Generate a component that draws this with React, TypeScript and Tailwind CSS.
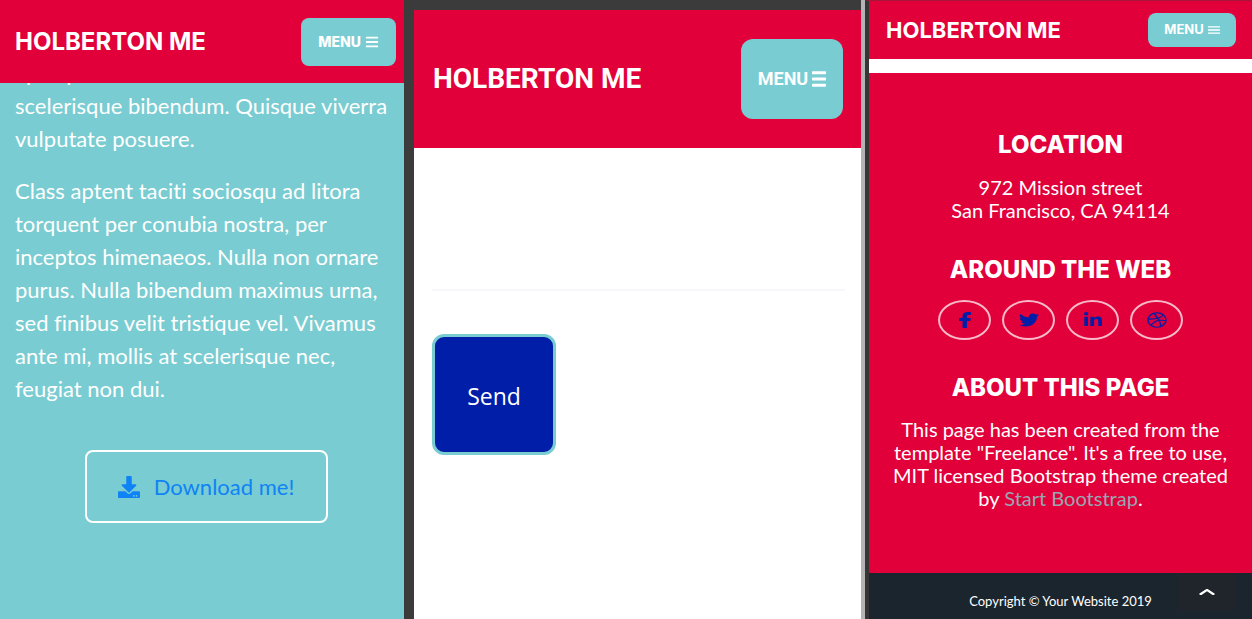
import React from "react";
import {
  FaBars,
  FaChevronUp,
  FaDownload,
  FaDribbble,
  FaFacebookF,
  FaLinkedinIn,
  FaTwitter,
} from "react-icons/fa";

const socialLinks = [
  { label: "Facebook", Icon: FaFacebookF, size: "h-4 w-[14px]" },
  { label: "Twitter", Icon: FaTwitter, size: "h-4 w-5" },
  { label: "LinkedIn", Icon: FaLinkedinIn, size: "h-4 w-[18px]" },
  { label: "Dribbble", Icon: FaDribbble, size: "h-4 w-5" },
];

function AboutPanel() {
  return (
    <section className="flex min-w-0 flex-col overflow-hidden bg-[#79ccd1] text-white">
      <header className="flex h-[83px] shrink-0 items-center justify-between bg-[#e1003a] pr-2 pl-[15px]">
        <a href="#top" className="font-['Inter',sans-serif] text-2xl leading-8 font-bold whitespace-nowrap">
          HOLBERTON ME
        </a>
        <button
          type="button"
          className="flex h-12 w-[95px] items-center justify-center gap-1 rounded-lg bg-[#79ccd1] font-['Inter',sans-serif] text-sm font-extrabold"
        >
          MENU <FaBars className="h-[14px] w-[14px]" aria-hidden="true" />
        </button>
      </header>
      <div className="overflow-hidden pl-[15px] font-['Lato',sans-serif] text-[22px] leading-[33px] [font-variant-ligatures:none]">
        <p className="-mt-[27px] mb-[19px] whitespace-nowrap">
          apex porta et
          <br />
          scelerisque bibendum. Quisque viverra
          <br />
          vulputate posuere.
        </p>
        <p className="whitespace-nowrap">
          Class aptent taciti sociosqu ad litora
          <br />
          torquent per conubia nostra, per
          <br />
          inceptos himenaeos. Nulla non ornare
          <br />
          purus. Nulla bibendum maximus urna,
          <br />
          sed finibus velit tristique vel. Vivamus
          <br />
          ante mi, mollis at scelerisque nec,
          <br />
          feugiat non dui.
        </p>
      </div>
      <a
        href="#download"
        className="mt-[45px] ml-2 flex h-[73px] w-[243px] items-center justify-center gap-[14px] self-center rounded-lg border-2 border-white font-['Lato',sans-serif] text-[22px] text-[#0f83f5]"
      >
        <FaDownload className="h-[22px] w-[22px]" aria-hidden="true" />
        Download me!
      </a>
    </section>
  );
}

function ContactPanel() {
  return (
    <section className="flex min-w-0 flex-col border-t-10 border-l-10 border-[#3b3b3b] bg-white">
      <header className="flex h-[138px] items-center justify-between bg-[#e1003a] pr-[18px] pl-[19px] text-white">
        <a href="#top" className="font-['Roboto',sans-serif] text-[28px] leading-8 font-bold whitespace-nowrap">
          HOLBERTON ME
        </a>
        <button
          type="button"
          className="flex h-20 w-[102px] items-center justify-center gap-1 rounded-xl bg-[#79ccd1] font-['Roboto',sans-serif] text-lg font-bold"
        >
          MENU <FaBars className="h-5 w-[14px]" preserveAspectRatio="none" aria-hidden="true" />
        </button>
      </header>
      <div className="flex flex-col items-start pt-[141px] pr-4 pl-[18px]">
        <hr className="w-full border-t-2 border-[#f5f7fa]" />
        <button
          type="submit"
          className="mt-[43px] h-[121px] w-[124px] rounded-xl border-3 border-[#79ccd1] bg-[#001ea8] pt-1 font-['Open_Sans',sans-serif] text-[23px] text-white"
        >
          Send
        </button>
      </div>
    </section>
  );
}

function FooterPanel() {
  return (
    <section className="flex min-w-0 border-l-4 border-[#b4b4b4]">
      <div className="flex min-w-0 grow flex-col border-t border-l-4 border-t-[#a5163a] border-l-[#353535] bg-white text-white">
        <header className="flex h-[58px] items-center justify-between bg-[#e1003a] pr-4 pl-[17px]">
          <a href="#top" className="font-['Inter',sans-serif] text-[22px] leading-6 font-bold whitespace-nowrap">
            HOLBERTON ME
          </a>
          <button
            type="button"
            className="flex h-[34px] w-[88px] items-center justify-center gap-1 rounded-lg bg-[#79ccd1] font-['Inter',sans-serif] text-[13px] font-bold"
          >
            MENU <FaBars className="h-[10px] w-3" preserveAspectRatio="none" aria-hidden="true" />
          </button>
        </header>
        <footer className="mt-[14px] flex grow flex-col">
          <div className="flex grow flex-col items-center bg-[#e1003a] pt-[60px] text-center font-['Lato',sans-serif] text-xl leading-[23px] [font-variant-ligatures:none]">
            <h2 className="font-['Inter',sans-serif] text-2xl leading-6 font-extrabold">LOCATION</h2>
            <p className="mt-[19px]">
              972 Mission street
              <br />
              San Francisco, CA 94114
            </p>
            <h2 className="mt-9 font-['Inter',sans-serif] text-2xl leading-6 font-extrabold">AROUND THE WEB</h2>
            <nav aria-label="Social" className="mt-[18px] flex gap-[11px]">
              {socialLinks.map(({ label, Icon, size }) => (
                <a
                  key={label}
                  href={"#" + label.toLowerCase()}
                  aria-label={label}
                  className="flex h-10 w-[53px] items-center justify-center rounded-[50%] border-2 border-[#f9b9c8] text-[#001ea8]"
                >
                  <Icon className={size} preserveAspectRatio="none" aria-hidden="true" />
                </a>
              ))}
            </nav>
            <h2 className="mt-9 font-['Inter',sans-serif] text-2xl leading-6 font-extrabold">ABOUT THIS PAGE</h2>
            <p className="mt-[18px] whitespace-nowrap">
              This page has been created from the
              <br />
              template "Freelance". It's a free to use,
              <br />
              MIT licensed Bootstrap theme created
              <br />
              by{" "}
              <a href="#bootstrap" className="text-[#9aa5b1]">
                Start Bootstrap
              </a>
              .
            </p>
          </div>
          <div className="relative flex h-[46px] items-center justify-center bg-[#1b252e] pt-[10px] font-['Lato',sans-serif]">
            <small className="text-[13px] leading-4">Copyright © Your Website 2019</small>
            <button
              type="button"
              aria-label="Back to top"
              className="absolute top-0 right-4 flex h-[38px] w-[58px] items-center justify-center rounded bg-[#20252b]"
            >
              <FaChevronUp className="h-3 w-4" preserveAspectRatio="none" aria-hidden="true" />
            </button>
          </div>
        </footer>
      </div>
    </section>
  );
}

export default function App() {
  return (
    <main className="grid min-h-screen grid-cols-[404fr_457fr_391fr] bg-[#3b3b3b]">
      <AboutPanel />
      <ContactPanel />
      <FooterPanel />
    </main>
  );
}
